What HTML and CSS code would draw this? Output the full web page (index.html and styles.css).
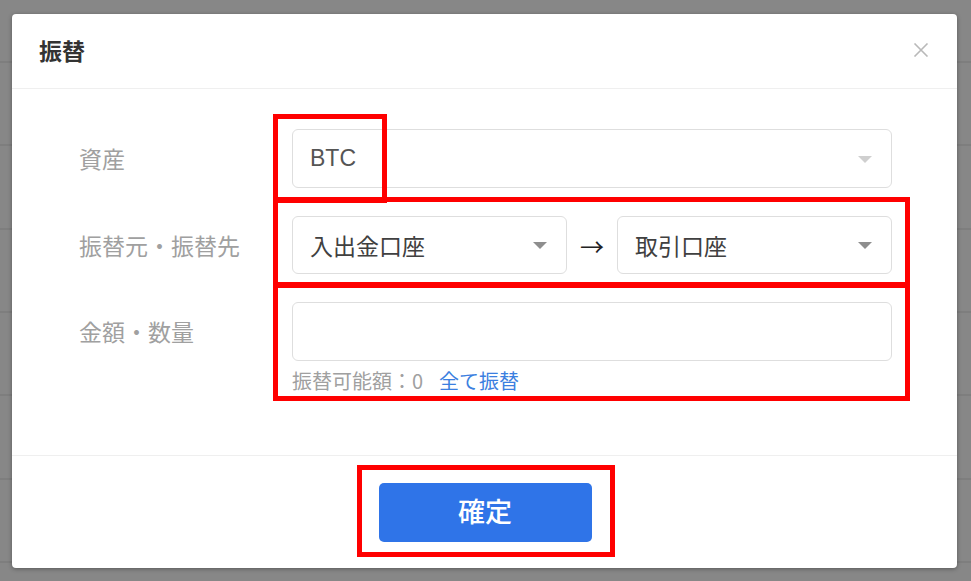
FILE: index.html
```html
<!DOCTYPE html>
<html lang="ja">
<head>
<meta charset="utf-8">
<title>振替</title>
<link rel="stylesheet" href="styles.css">
</head>
<body>
<div class="page">
  <div class="modal">
    <div class="modal-header">
      <h2 class="modal-title">振替</h2>
      <button class="close" aria-label="close">
        <svg width="16" height="14" viewBox="0 0 16 14"><path d="M1.5 0.5 L14.5 13.5 M14.5 0.5 L1.5 13.5" stroke="#b9b9b9" stroke-width="1.6" fill="none"/></svg>
      </button>
    </div>
    <div class="modal-body">
      <div class="row">
        <div class="label">資産</div>
        <div class="control">
          <div class="select select-full"><span class="value latin">BTC</span><span class="caret caret-light"></span></div>
        </div>
      </div>
      <div class="row row-mid">
        <div class="label">振替元・振替先</div>
        <div class="control pair">
          <div class="select select-half"><span class="value">入出金口座</span><span class="caret"></span></div>
          <div class="arrow">→</div>
          <div class="select select-half"><span class="value">取引口座</span><span class="caret"></span></div>
        </div>
      </div>
      <div class="row">
        <div class="label">金額・数量</div>
        <div class="control">
          <div class="input"></div>
          <div class="hint">振替可能額：0<a class="hint-link">全て振替</a></div>
        </div>
      </div>
    </div>
    <div class="modal-footer">
      <button class="btn-primary">確定</button>
    </div>
  </div>
  <div class="mark mark-1"></div>
  <div class="mark mark-2"></div>
  <div class="mark mark-3"></div>
  <div class="mark mark-4"></div>
</div>
</body>
</html>
```
FILE: styles.css
```css
* { box-sizing: border-box; }
html, body { margin: 0; padding: 0; }
body {
  width: 971px;
  height: 581px;
  overflow: hidden;
  background-color: #878787;
  background-image: repeating-linear-gradient(to bottom,
    transparent 0px, transparent 61px,
    #7e7e7e 61px, #7e7e7e 63px,
    transparent 63px, transparent 83.3px);
  font-family: "Noto Sans CJK JP", "Liberation Sans", sans-serif;
}
.page {
  position: relative;
  padding: 14px 14px 13px 12px;
  height: 581px;
}
.modal {
  width: 945px;
  height: 554px;
  background: #fff;
  border-radius: 4px;
  box-shadow: 0 1px 4px rgba(0,0,0,0.35);
  display: flex;
  flex-direction: column;
}
.modal-header {
  height: 75px;
  border-bottom: 1px solid #efefef;
  display: flex;
  align-items: center;
  justify-content: space-between;
  padding: 0 28px 0 27px;
}
.modal-title {
  margin: 0;
  font-size: 23px;
  font-weight: 700;
  color: #333;
  line-height: 1;
  padding-bottom: 2px;
}
.close {
  border: 0;
  background: none;
  padding: 0;
  width: 16px;
  height: 14px;
  display: block;
  margin-top: -3px;
}
.close svg { display: block; }
.modal-body {
  flex: 1;
  padding: 40px 66px 0 66px;
  display: flex;
  flex-direction: column;
  gap: 28px;
}
.row {
  display: flex;
  align-items: flex-start;
}
.label {
  width: 214px;
  height: 59px;
  line-height: 59px;
  font-size: 23px;
  color: #a0a0a0;
  padding-left: 1px;
  flex-shrink: 0;
}
.row-mid .label { height: 58px; line-height: 58px; }
.control { flex: 1; }
.pair { display: flex; align-items: center; }
.select {
  position: relative;
  height: 59px;
  border: 1px solid #dedede;
  border-radius: 6px;
  display: flex;
  align-items: center;
  padding-left: 17px;
  font-size: 23px;
  color: #404040;
}
.select-full { width: 600px; }
.select-half { width: 275px; height: 58px; }
.latin { font-family: "Liberation Sans", sans-serif; color: #555; }
.caret {
  position: absolute;
  right: 19px;
  top: 50%;
  margin-top: -3px;
  width: 0;
  height: 0;
  border-left: 7px solid transparent;
  border-right: 7px solid transparent;
  border-top: 7px solid #8e8e8e;
}
.caret-light { border-top-color: #cfcfcf; }
.arrow {
  width: 50px;
  text-align: center;
  font-size: 24px;
  color: #222;
  line-height: 1;
  padding-top: 2px;
}
.input {
  width: 600px;
  height: 59px;
  border: 1px solid #dedede;
  border-radius: 6px;
}
.hint {
  margin-top: 8px;
  font-size: 20px;
  line-height: 24px;
  color: #a0a0a0;
}
.hint-link {
  margin-left: 16px;
  color: #3c7fe0;
}
.modal-footer {
  height: 113px;
  border-top: 1px solid #efefef;
  display: flex;
  justify-content: center;
  align-items: flex-start;
  padding-top: 27px;
  padding-left: 1px;
}
.btn-primary {
  width: 213px;
  height: 59px;
  border: 0;
  border-radius: 5px;
  background: #2f74e8;
  color: #fff;
  font-family: "Noto Sans CJK JP", sans-serif;
  font-size: 27px;
  font-weight: 500;
  padding: 0 0 4px 0;
  line-height: 1;
}
.mark {
  position: absolute;
  border: 5px solid #ff0000;
}
.mark-1 { left: 273px; top: 114px; width: 114px; height: 89px; }
.mark-2 { left: 273px; top: 197px; width: 637px; height: 91px; }
.mark-3 { left: 273px; top: 282px; width: 637px; height: 119px; }
.mark-4 { left: 357px; top: 465px; width: 258px; height: 92px; }
```
